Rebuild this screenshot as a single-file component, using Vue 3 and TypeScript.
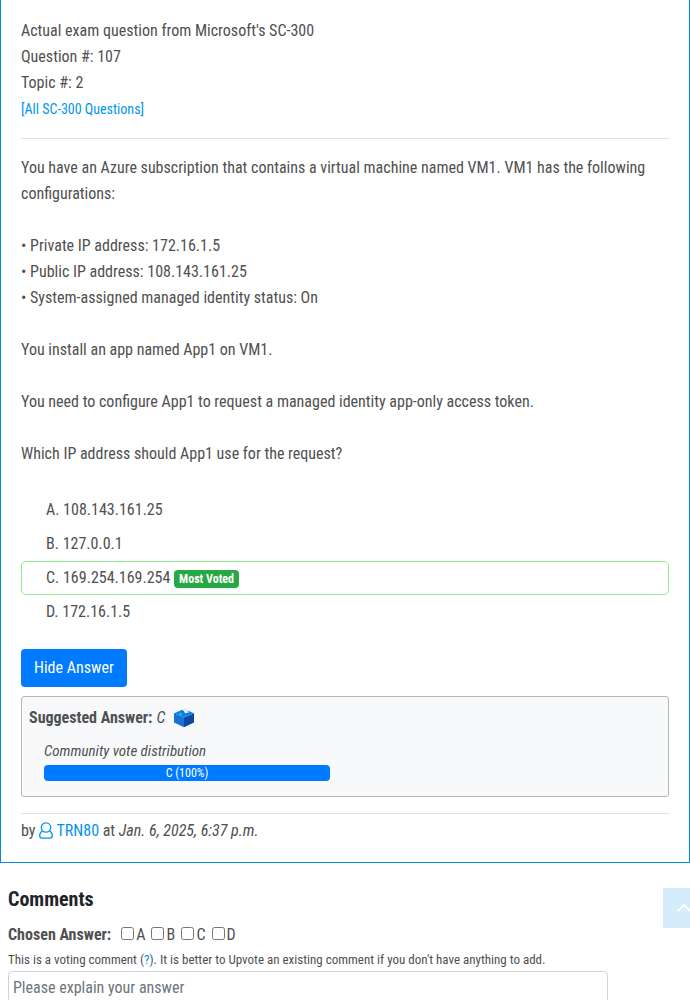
<script setup lang="ts">
import { ref } from 'vue'

interface Choice {
  letter: string
  text: string
  mostVoted?: boolean
}

const choices: Choice[] = [
  { letter: 'A', text: '108.143.161.25' },
  { letter: 'B', text: '127.0.0.1' },
  { letter: 'C', text: '169.254.169.254', mostVoted: true },
  { letter: 'D', text: '172.16.1.5' },
]

const facts: string[] = [
  'Private IP address: 172.16.1.5',
  'Public IP address: 108.143.161.25',
  'System-assigned managed identity status: On',
]

const answerShown = ref(true)
const chosen = ref<string[]>([])
const comment = ref('')
</script>

<template>
  <div class="page">
    <main class="card">
      <header class="origin">
        <div>Actual exam question from Microsoft's SC-300</div>
        <div>Question #: 107</div>
        <div>Topic #: 2</div>
        <div><a class="all-link" href="#">[All SC-300 Questions]</a></div>
      </header>
      <hr class="rule" />
      <section class="question">
        <p>You have an Azure subscription that contains a virtual machine named VM1. VM1 has the following configurations:</p>
        <p><template v-for="fact in facts" :key="fact">• {{ fact }}<br /></template></p>
        <p>You install an app named App1 on VM1.</p>
        <p>You need to configure App1 to request a managed identity app-only access token.</p>
        <p>Which IP address should App1 use for the request?</p>
      </section>
      <ul class="choices">
        <li v-for="c in choices" :key="c.letter" :class="{ voted: c.mostVoted }">
          {{ c.letter }}. {{ c.text }}
          <span v-if="c.mostVoted" class="badge">Most Voted</span>
        </li>
      </ul>
      <button class="toggle" type="button" @click="answerShown = !answerShown">
        {{ answerShown ? 'Hide Answer' : 'Reveal Solution' }}
      </button>
      <section v-if="answerShown" class="answer">
        <div class="suggested">
          <strong>Suggested Answer:</strong>
          <em>C</em>
          <svg class="ballot" viewBox="0 0 20 20" aria-hidden="true">
            <path d="M0 5.2 10 9.5V19.2L0 14.6Z" fill="#1672d3" />
            <path d="M20 5.2 10 9.5V19.2L20 14.6Z" fill="#0d47a1" />
            <path d="M0 5.2 10 1 20 5.2 10 9.5Z" fill="#0288e5" />
            <path d="M7.5 3.2 10 2.4 14.5 5.2 12 6.2Z" fill="#075aaf" />
            <path d="M7.8 1.8 12.2 0 14.8 4.6 11.2 5.6 9.4 3Z" fill="#e3edf7" />
            <path d="M5.2 6.1 6.6 5.5 8 6.1 6.6 6.8Z" fill="#c5def4" />
          </svg>
        </div>
        <div class="votes">
          <em>Community vote distribution</em>
          <div class="track"><div class="bar">C (100%)</div></div>
        </div>
      </section>
      <hr class="rule" />
      <footer class="byline">
        by
        <a href="#"><svg class="user" viewBox="0 0 14 17" aria-hidden="true">
          <circle cx="7" cy="5.5" r="4.7" />
          <path d="M3.6 9C1.6 9.8.7 11.6.7 13.6c0 1.5 1 2.6 2.5 2.6h7.6c1.5 0 2.5-1.1 2.5-2.6 0-2-.9-3.8-2.9-4.6" />
        </svg> TRN80</a>
        at <em>Jan. 6, 2025, 6:37 p.m.</em>
      </footer>
    </main>

    <section class="comments">
      <h2>Comments</h2>
      <div class="pick">
        <strong>Chosen Answer:</strong>
        <label v-for="c in choices" :key="c.letter">
          <input v-model="chosen" type="checkbox" :value="c.letter" />{{ c.letter }}
        </label>
      </div>
      <label class="hint" for="comment">This is a voting comment (<a href="#">?</a>). It is better to Upvote an existing comment if you don't have anything to add.</label>
      <textarea id="comment" v-model="comment" placeholder="Please explain your answer"></textarea>
    </section>

    <button class="to-top" type="button" aria-label="Back to top">
      <svg viewBox="0 0 14 8" aria-hidden="true"><path d="M1 7 7 1 13 7" /></svg>
    </button>
  </div>
</template>

<style>
html {
  scrollbar-width: none;
}
body {
  background: #fff;
}
</style>

<style scoped>
.page,
.page * {
  box-sizing: border-box;
}
.page {
  height: 100vh;
  overflow: hidden;
  font-family: "Roboto Condensed", "Liberation Sans Narrow", Roboto, sans-serif;
  font-size: 16px;
  line-height: 26px;
  color: #505050;
}
a {
  color: #0095eb;
  text-decoration: none;
}
.card {
  padding: 18px 20px;
  border: 1px solid #0090e3;
  border-top: 0;
}
.all-link {
  font-size: 14px;
}
.rule {
  height: 1px;
  margin: 16px 0;
  border: 0;
  background: #dfdfdf;
}
.question p {
  margin: 0 0 26px;
}
.choices {
  margin: 0 0 20px;
  padding: 0;
  list-style: none;
}
.choices li {
  padding: 3px 24px;
  border: 1px solid transparent;
  border-radius: 5px;
}
.choices li.voted {
  border-color: #90ee90;
}
.badge {
  display: inline-block;
  padding: 3px 5px;
  border-radius: 4px;
  background: #28a745;
  color: #fff;
  font-size: 12px;
  font-weight: 700;
  line-height: 12px;
  vertical-align: baseline;
}
.toggle {
  display: block;
  height: 38px;
  padding: 0 13px;
  border: 0;
  border-radius: 4px;
  background: #007bff;
  color: #fff;
  font: inherit;
}
.answer {
  margin-top: 9px;
  padding: 8px 7px 15px;
  border: 1px solid #b5b7b9;
  border-radius: 3px;
  background: #f8f9fb;
}
.suggested {
  display: flex;
  align-items: center;
  gap: 4px;
}
.ballot {
  width: 20px;
  height: 20px;
  margin-left: 5px;
}
.votes {
  padding: 8px 15px 0;
}
.votes em {
  display: block;
  font-size: 15px;
  line-height: 24px;
}
.track {
  max-width: 286px;
  margin-top: 2px;
}
.bar {
  border-radius: 4px;
  background: #007bff;
  color: #fff;
  font-size: 12px;
  line-height: 16px;
  text-align: center;
}
.answer + .rule {
  margin-bottom: 4px;
}
.user {
  width: 14px;
  height: 17px;
  vertical-align: -3px;
  fill: none;
  stroke: currentColor;
  stroke-width: 1.3;
}
.comments {
  padding: 23px 8px 0;
}
h2 {
  margin: 0 0 10px;
  color: #212529;
  font-size: 20px;
  font-weight: 700;
  line-height: 26px;
}
.pick {
  display: flex;
  gap: 6px;
}
.pick strong {
  margin-right: 4px;
}
.pick label {
  display: flex;
  align-items: center;
  gap: 2px;
  min-width: 24px;
}
.pick input {
  width: 13px;
  height: 13px;
  margin: 0 0 3px;
}
.hint {
  display: block;
  font-size: 13px;
  line-height: 23px;
}
textarea {
  display: block;
  width: 100%;
  max-width: 600px;
  height: 80px;
  padding: 3px 4px;
  border: 1px solid #ced4da;
  border-radius: 4px;
  font: inherit;
  resize: none;
}
textarea::placeholder {
  color: #6c757d;
}
.to-top {
  position: fixed;
  right: -14px;
  bottom: 72px;
  display: grid;
  place-items: center;
  width: 41px;
  height: 40px;
  padding: 0;
  border: 0;
  background: #d5edfb;
}
.to-top svg {
  width: 14px;
  height: 8px;
  fill: none;
  stroke: #fff;
  stroke-width: 2;
}
</style>
